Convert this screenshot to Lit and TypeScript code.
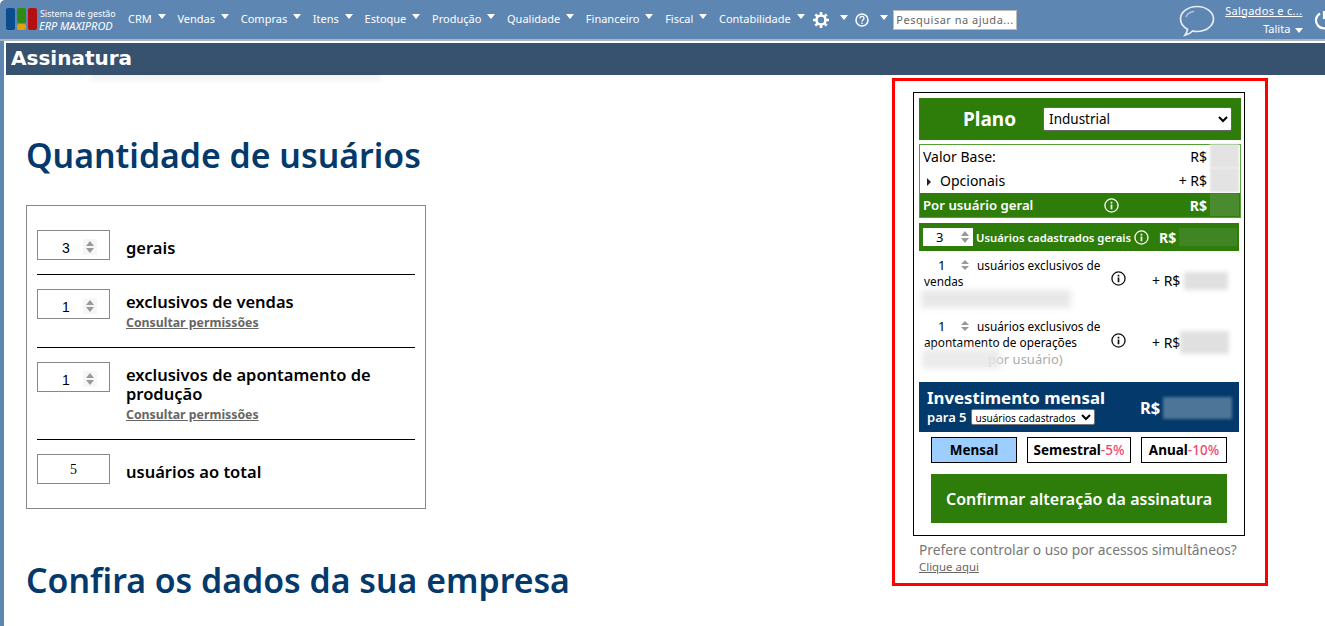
import { LitElement, html, css, svg } from "lit";
import { customElement } from "lit/decorators.js";

const NAV = ["CRM","Vendas","Compras","Itens","Estoque","Produção","Qualidade","Financeiro","Fiscal","Contabilidade"];

const caret = html`<span class="caret"></span>`;
const spin = html`<span class="spin"><i class="up"></i><i class="down"></i></span>`;
const info = (c: string, s = 15) => html`<svg class="info" width=${s} height=${s} viewBox="0 0 16 16" fill="none" stroke=${c}>
  ${svg`<circle cx="8" cy="8" r="7" stroke-width="1.4"/><path d="M8 7v5M8 4v1.8" stroke-width="1.8"/>`}</svg>`;

@customElement("app-root")
export class AppRoot extends LitElement {
  static styles = css`
    :host { display:block; width:1325px; height:626px; overflow:hidden; background:#fff; font-family:"Noto Sans",sans-serif; color:#000; }
    * { box-sizing:border-box; }
    .nav { height:41px; background:#5d86b3; border-bottom:2px solid #a9b4bf; display:flex; align-items:center; color:#fff; padding-left:6px; overflow:hidden; border-top-left-radius:5px; }
    .nav > * { flex:none; }
    .logo { display:flex; gap:2px; height:22px; margin-top:-1px; }
    .logo b { width:9px; border-radius:2px; display:block; }
    .logo .mid { display:flex; flex-direction:column; gap:1px; width:9px; }
    .brand { margin-left:2px; width:85px; font-size:11px; line-height:12px; white-space:nowrap; }
    .brand small { font-size:8.8px; display:block; margin-left:1px; }
    .brand em { font-size:11px; }
    .items { display:flex; margin-left:4px; margin-top:-2px; }
    .item { font-size:11px; display:flex; align-items:center; margin-right:11.7px; }
    .caret { display:inline-block; width:0; height:0; border-left:4.5px solid transparent; border-right:4.5px solid transparent; border-top:5px solid #fff; margin-left:6px; margin-top:-4px; }
    .tool { display:flex; align-items:center; }
    .search { width:124px; height:20px; background:#fff; border:1px solid #bbb; color:#666; font-size:11px; padding:0 2px; margin-left:5px; display:flex; align-items:center; letter-spacing:.5px; white-space:nowrap; overflow:hidden; }
    .chat { margin-left:162px; margin-top:2px; }
    .user { width:80px; margin-left:7px; font-size:11px; text-align:right; display:flex; flex-direction:column; gap:3px; margin-top:-1px;}
    .user u { letter-spacing:.3px; white-space:nowrap; }
    .user .caret { margin-left:5px; margin-right:-1px; }
    .power { margin-left:12px; }

    .page { display:flex; flex-direction:column; border-left:4px solid #5d86b3; height:585px; }
    .title { height:32px; margin:2px 0 0 2px; background:#36526f; color:#fff; font:bold 20px "DejaVu Sans",sans-serif; padding-left:5px; line-height:31px; flex:none; }
    .shade { height:0; width:288px; margin-left:88px; box-shadow:0 2px 6px 1px rgba(0,0,0,.18); flex:none; }
    .main { display:flex; flex:1; min-height:0; }
    .left { width:888px; padding-left:22px; flex:none; }
    h1 { font-size:33.85px; font-weight:600; color:#033a6b; margin:0; line-height:44px; white-space:nowrap; }
    .h1a { margin-top:58px; }
    .h1b { margin-top:49px; }
    .box { width:400px; height:304px; margin-top:28px; border:1px solid #888; padding:0 10px; display:flex; flex-direction:column; }
    .row { display:flex; border-bottom:1px solid #000; padding-top:24px; }
    .row:last-child { border-bottom:0; padding-top:14px; }
    .r1 { height:69px; } .r2 { height:73px; padding-top:14px; } .r3 { height:92px; padding-top:14px; }
    .num { width:73px; height:30px; border:1px solid #888; font:14px "Liberation Sans",sans-serif; display:flex; align-items:center; flex:none; padding:5px 0 0 22px; position:relative; }
    .num .v { width:12px; text-align:center; }
    .num.total { padding:2px 0 0; justify-content:center; font-family:"Liberation Serif",serif; }
    .num .spin { position:absolute; left:45px; top:8px; width:14px; height:16px; background:#f6f6f6; justify-content:center; }
    .spin { display:inline-flex; flex-direction:column; gap:2px; width:10px; align-items:center; }
    .spin i { width:0; height:0; border:4px solid transparent; display:block; }
    .spin .up { border-top:0; border-bottom:5px solid #999; }
    .spin .down { border-bottom:0; border-top:5px solid #999; }
    .lbl { margin-left:16px; font-size:16.5px; font-weight:600; line-height:19px; padding-top:3px; }
    .lbl.one { padding-top:8px; }
    .lbl a { display:block; font-size:12.3px; font-weight:700; color:#666; text-decoration:underline; line-height:15px; margin-top:4px; }

    .panel { width:376px; height:508px; margin-top:3px; border:3px solid #f00; padding:11px 0 0 18px; flex:none; }
    .card { width:332px; height:444px; border:1px solid #000; padding:5px; display:flex; flex-direction:column; }
    .plano { height:42px; width:322px; background:#2e7d0a; display:flex; align-items:center; color:#fff; font-size:19px; font-weight:700; flex:none; padding-left:44px; }
    select { font-family:"Noto Sans",sans-serif; }
    .plano select { width:189px; height:24px; margin-left:27px; font-size:13.5px; font-weight:400; background:#fff; color:#000; border-radius:2px; border:1px solid #666; padding-left:1px; }
    .vals { margin-top:4px; height:74px; width:322px; border:1px solid #55a033; font-size:14px; flex:none; }
    .vline { height:24px; display:flex; align-items:center; padding:0 0 2px 3px; justify-content:space-between; }
    .rs { display:flex; align-items:center; }
    .blur { background:#ddd; filter:blur(2px); display:block; }
    .b1 { width:29px; height:24px; margin-left:3px; margin-right:1px; background:#e3e3e3; filter:blur(1px); }
    .tri { width:0; height:0; border:4px solid transparent; border-left:4px solid #222; border-right:0; margin:-3px 9px 0 4px; display:inline-block; }
    .vline.g { background:#2e7d0a; color:#fff; font-weight:600; height:24px; padding-bottom:0; }
    .vline.g > span:first-child { width:181px; font-size:13.2px; white-space:nowrap; }
    .vline.g .rs { margin-left:auto; font-weight:700; }
    .b2 { background:#4a8b30; width:29px; height:22px; margin-left:3px; margin-right:1px; filter:blur(.5px); }
    .gerais { margin-top:5px; width:320px; height:28px; background:#2e7d0a; flex:none; color:#fff; display:flex; align-items:center; padding:0 2px 0 4px; font-size:11.3px; font-weight:600; white-space:nowrap; }
    .gerais .n { width:50px; height:18px; background:#fff; color:#000; display:flex; align-items:center; font-size:13px; font-weight:400; padding-left:13px; flex:none; }
    .gerais .n span:first-child { width:24px; }
    .gerais .t { margin-left:3px; width:159px; }
    .gerais .rr { margin-left:10px; font-size:14px; font-weight:700; }
    .b3 { background:#3f8523; width:58px; height:18px; margin-left:3px; filter:blur(.5px); }
    .ex { position:relative; font-size:11.8px; line-height:16px; flex:none; padding-left:5px; white-space:nowrap; }
    .ex1 { height:67px; padding-top:6px; }
    .ex2 { height:56px; padding-top:0; }
    .l1 { display:flex; align-items:center; padding-left:14px; }
    .l1 b { font-size:13px; font-weight:400; width:22px; }
    .l1 .spin { width:10px; margin-right:7px; }
    .ex .spin i { border-width:4px; }
    .ex .info, .ex .amount { position:absolute; }
    .ex .info { left:192px; }
    .ex1 .info { top:20px; } .ex2 .info { top:15px; }
    .amount { left:233px; display:flex; align-items:center; font-size:14px; }
    .ex1 .amount { top:21px; } .ex2 .amount { top:13px; }
    .b4 { width:44px; height:18px; margin-left:4px; background:#e0e0e0; }
    .ex2 .b4 { height:23px; width:49px; margin-left:0; }
    .smear { height:18px; background:#e8e8e8; filter:blur(3px); margin-left:-3px; }
    .s1 { width:150px; margin-top:1px; }
    .pu { display:flex; align-items:center; height:18px; color:#aaa; font-size:13px; margin-left:-2px; }
    .pu .blur { width:78px; height:20px; margin-right:-12px; background:rgba(232,232,232,.85); filter:blur(3px); position:relative; z-index:1; }
    .inv { width:320px; height:50px; background:#033a6b; color:#fff; margin-top:8px; flex:none; padding:5px 0 0 8px; position:relative; }
    .inv .h { font-size:16.8px; font-weight:700; line-height:22px; }
    .inv .p { font-size:13px; font-weight:600; display:flex; align-items:center; line-height:16px; }
    .inv select { font-size:10px; height:16px; width:124px; margin-left:4px; padding:0; border:1px solid #777; border-radius:2px; background:#fff; color:#000; }
    .inv .a { position:absolute; left:221px; top:14px; display:flex; align-items:center; font-size:16.5px; font-weight:700; }
    .b5 { width:69px; height:22px; margin-left:3px; background:#4d7597; filter:blur(1.5px); }
    .per { display:flex; margin:5px 0 0 12px; gap:10px; flex:none; }
    .per div { height:26px; border:1px solid #000; display:flex; align-items:center; justify-content:center; font-size:13.5px; font-weight:700; white-space:nowrap; }
    .per .on { background:#9ccfff; width:86px; }
    .per .s { width:104px; } .per .y { width:86px; }
    .per em { font-style:normal; color:#f0466e; font-weight:500; }
    .confirm { margin:11px 0 0 12px; width:296px; height:49px; background:#2e7d0a; color:#fff; font-size:16px; font-weight:600; display:flex; align-items:center; justify-content:center; flex:none; }
    .after { margin:5px 0 0 6px; color:#777; font-size:13.8px; line-height:18px; white-space:nowrap; }
    .after a { display:block; font-size:11.4px; color:#666; text-decoration:underline; line-height:15px; }
  `;

  render() {
    return html`
      <div class="nav">
        <div class="logo">
          <b style="background:#0b4d8c"></b>
          <span class="mid"><b style="flex:1;background:#2f8a12"></b><b style="height:6px;background:#e0a012"></b></span>
          <b style="background:#b50f0f"></b>
        </div>
        <div class="brand"><small>Sistema de gestão</small><em>ERP MAXIPROD</em></div>
        <div class="items">${NAV.map(n => html`<span class="item">${n}${caret}</span>`)}</div>
        <span class="tool" style="margin-left:-4px">
          <svg width="18" height="18" viewBox="0 0 18 18" fill="none" stroke="#fff">
            <circle cx="9" cy="9" r="4.5" stroke-width="2.6"/>
            <path d="M9 1v3M9 14v3M1 9h3M14 9h3M3.3 3.3l2.1 2.1M12.6 12.6l2.1 2.1M3.3 14.700l2.100-2.100M12.600 5.400l2.100-2.100" stroke-width="2.6"/>
          </svg>
          <span class="caret" style="margin-left:10px"></span>
        </span>
        <span class="tool" style="margin-left:7px">
          <svg width="14" height="14" viewBox="0 0 14 14" fill="none" stroke="#fff" style="margin-top:1px">
            <circle cx="7" cy="7" r="6" stroke-width="1.5"/>
            <path d="M5 5.400c0-2.600 4-2.600 4 0 0 1.500-2 1.600-2 3M7 9.600v1.400" stroke-width="1.300"/>
          </svg>
          <span class="caret" style="margin-left:11px"></span>
        </span>
        <div class="search">Pesquisar na ajuda...</div>
        <svg class="chat" width="36" height="32" viewBox="0 0 36 32" fill="none" stroke="#e8eef5">
          <path d="M18 1.500C9 1.500 1.500 7 1.500 14c0 4.500 3 8 7 10.200-.2 2.200-1.200 4.300-2.500 6 3-.6 5.700-2.200 7.500-4.200 1.400.3 3 .5 4.500.5 9 0 16.500-5.500 16.500-12.500S27 1.500 18 1.500Z" stroke-width="1.700"/>
          <path d="M7 12c1-3 4-5 8-5.600" stroke-width="1.200" opacity=".7"/>
        </svg>
        <div class="user"><u>Salgados e c...</u><span>Talita${caret}</span></div>
        <svg class="power" width="20" height="20" viewBox="0 0 20 20" fill="none" stroke="#fff" stroke-width="2.200">
          <path d="M6 3.500a8 8 0 1 0 8 0M10 1v8"/>
        </svg>
      </div>
      <div class="page">
        <div class="title">Assinatura</div>
        <div class="shade"></div>
        <div class="main">
          <div class="left">
            <h1 class="h1a">Quantidade de usuários</h1>
            <div class="box">
              <div class="row r1"><div class="num"><span class="v">3</span>${spin}</div><div class="lbl one">gerais</div></div>
              <div class="row r2"><div class="num"><span class="v">1</span>${spin}</div><div class="lbl">exclusivos de vendas<a>Consultar permissões</a></div></div>
              <div class="row r3"><div class="num"><span class="v">1</span>${spin}</div><div class="lbl">exclusivos de apontamento de<br>produção<a>Consultar permissões</a></div></div>
              <div class="row"><div class="num total">5</div><div class="lbl one">usuários ao total</div></div>
            </div>
            <h1 class="h1b">Confira os dados da sua empresa</h1>
          </div>
          <div class="panel">
            <div class="card">
              <div class="plano">Plano<select><option>Industrial</option></select></div>
              <div class="vals">
                <div class="vline"><span>Valor Base:</span><span class="rs">R$<span class="blur b1"></span></span></div>
                <div class="vline"><span><i class="tri"></i>Opcionais</span><span class="rs">+ R$<span class="blur b1"></span></span></div>
                <div class="vline g"><span>Por usuário geral</span>${info("#fff")}<span class="rs">R$<span class="blur b2"></span></span></div>
              </div>
              <div class="gerais">
                <div class="n"><span>3</span>${spin}</div>
                <span class="t">Usuários cadastrados gerais</span>${info("#fff")}
                <span class="rr">R$</span><span class="blur b3"></span>
              </div>
              <div class="ex ex1">
                <div class="l1"><b>1</b>${spin}usuários exclusivos de</div>vendas
                <div class="smear s1"></div>
                ${info("#111")}
                <div class="amount">+ R$<span class="blur b4"></span></div>
              </div>
              <div class="ex ex2">
                <div class="l1"><b>1</b>${spin}usuários exclusivos de</div>apontamento de operações
                <div class="pu"><span class="blur"></span>por usuário)</div>
                ${info("#111")}
                <div class="amount">+ R$<span class="blur b4"></span></div>
              </div>
              <div class="inv">
                <div class="h">Investimento mensal</div>
                <div class="p">para 5<select><option>usuários cadastrados</option></select></div>
                <div class="a">R$<span class="blur b5"></span></div>
              </div>
              <div class="per">
                <div class="on">Mensal</div>
                <div class="s">Semestral<em>-5%</em></div>
                <div class="y">Anual<em>-10%</em></div>
              </div>
              <div class="confirm">Confirmar alteração da assinatura</div>
            </div>
            <div class="after">Prefere controlar o uso por acessos simultâneos?<a>Clique aqui</a></div>
          </div>
        </div>
      </div>
    `;
  }
}
